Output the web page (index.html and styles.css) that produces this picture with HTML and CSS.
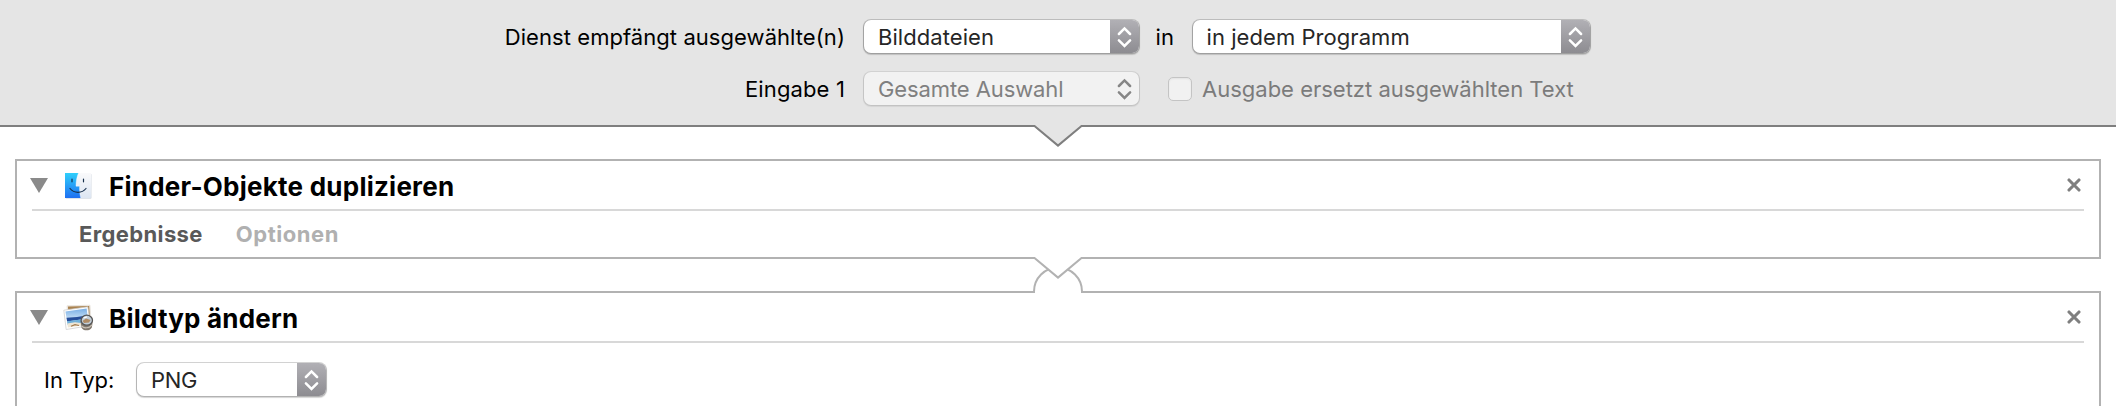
FILE: index.html
```
<!DOCTYPE html>
<html lang="de">
<head>
<meta charset="utf-8">
<title>Automator</title>
<link rel="stylesheet" href="styles.css">
</head>
<body>
<svg class="defs" width="0" height="0">
  <symbol id="chevrons" viewBox="0 0 29 34">
    <path d="M8.9 14 14.5 8.4 20.1 14M8.9 20.4 14.5 26 20.1 20.4" fill="none" stroke="currentColor" stroke-width="2.5" stroke-linecap="round" stroke-linejoin="miter"/>
  </symbol>
  <symbol id="close" viewBox="0 0 14 14">
    <path d="M2 2 12 12M12 2 2 12" fill="none" stroke="#7f7f7f" stroke-width="3.1" stroke-linecap="round"/>
  </symbol>
</svg>

<header class="service">
  <div class="row">
    <span class="label">Dienst empfängt ausgewählte(n)</span>
    <div class="popup popup-type"><span class="value">Bilddateien</span><svg class="stepper"><use href="#chevrons"/></svg></div>
    <span class="in">in</span>
    <div class="popup popup-app"><span class="value">in jedem Programm</span><svg class="stepper"><use href="#chevrons"/></svg></div>
  </div>
  <div class="row">
    <span class="label label-input">Eingabe 1</span>
    <div class="popup popup-type disabled"><span class="value">Gesamte Auswahl</span><svg class="stepper"><use href="#chevrons"/></svg></div>
    <span class="checkbox"></span>
    <span class="check-label">Ausgabe ersetzt ausgewählten Text</span>
  </div>
  <svg class="pointer" width="52" height="24" viewBox="0 0 52 24">
    <path d="M0 0H52V2H49.500L26 21.500 2.500 2H0Z" fill="#e5e5e5"/>
    <path d="M0 1H2.500L26 20.600 49.500 1H52" fill="none" stroke="#7f7f7f" stroke-width="2"/>
  </svg>
</header>

<main class="workflow">
  <section class="action">
    <div class="head">
      <svg class="disclosure" width="18" height="15" viewBox="0 0 18 15"><path d="M0 0H18L9 15Z" fill="#8a8a8a"/></svg>
      <svg class="icon" width="32" height="28" viewBox="0 0 32 28">
        <defs>
          <linearGradient id="blue" x1="0" y1="0" x2="0" y2="1"><stop offset="0" stop-color="#2fcffb"/><stop offset="1" stop-color="#1f70f2"/></linearGradient>
          <linearGradient id="pale" x1="0" y1="0" x2="0" y2="1"><stop offset="0" stop-color="#fafafb"/><stop offset="1" stop-color="#dde6f2"/></linearGradient>
        </defs>
        <rect x="2.500" y="1.700" width="26" height="25" rx="1" fill="#d5dbe3"/>
        <rect x="2" y="1" width="26" height="25" rx="1" fill="url(#pale)"/>
        <path d="M2 1H15.500C13.800 5 13 9.500 13 14.200H16.600C16.400 18 16.800 22.500 17.800 26H2Z" fill="url(#blue)"/>
        <path d="M15.500 1C13.800 5 13 9.500 13 14.200H16.600C16.400 18 16.800 22.500 17.800 26" fill="none" stroke="#fff" stroke-opacity=".5" stroke-width=".8"/>
        <path d="M9 7V9.800M20.500 7V9.800" stroke="#17304d" stroke-width="1.200" stroke-linecap="round"/>
        <path d="M7 16.500C11 21.600 19 21.600 23 16.500" fill="none" stroke="#17304d" stroke-width="1.200" stroke-linecap="round"/>
      </svg>
      <h2 class="title">Finder-Objekte duplizieren</h2>
      <svg class="close" width="14" height="14"><use href="#close"/></svg>
    </div>
    <div class="tabs"><span class="tab tab-results">Ergebnisse</span><span class="tab tab-options">Optionen</span></div>
    <svg class="link" width="52" height="36" viewBox="0 0 52 36">
      <path d="M2 34V36H50V34A24 24 0 0 0 2 34Z" fill="#fff"/>
      <path d="M2 36V34.500A24 24 0 0 1 50 34.500V36" fill="none" stroke="#b2b2b2" stroke-width="2"/>
      <path d="M0 0H52V2H49.500L26 21.500 2.500 2H0Z" fill="#fff"/>
      <path d="M0 1H2.500L26 20.600 49.500 1H52" fill="none" stroke="#b2b2b2" stroke-width="2"/>
    </svg>
  </section>

  <section class="action action-open">
    <div class="head">
      <svg class="disclosure" width="18" height="15" viewBox="0 0 18 15"><path d="M0 0H18L9 15Z" fill="#8a8a8a"/></svg>
      <svg class="icon" width="32" height="28" viewBox="0 0 32 28">
        <defs>
          <linearGradient id="sky" x1="0" y1="0" x2="0" y2="1"><stop offset="0" stop-color="#79afe6"/><stop offset="1" stop-color="#c8e1f6"/></linearGradient>
        </defs>
        <path d="M4 1.800 27 1.200 28 17 5 18Z" fill="#f1ece4" stroke="#d8d1c7" stroke-width=".5"/>
        <path d="M5 2.600 26.200 2 26.800 12 5.500 13Z" fill="#a9824f"/>
        <path d="M.8 6.200 24.800 2.800 27.600 21.500 3.200 25.500Z" fill="#fff" stroke="#c9c9c9" stroke-width=".7"/>
        <path d="M2.500 7.500 23.600 4.500 24.600 12 3.600 15Z" fill="url(#sky)"/>
        <path d="M3.500 13.800 14 13 24.600 11.200 25.300 14.600 4.100 17.600Z" fill="#274f9b"/>
        <path d="M4 17.200 25.300 14.500 25.900 19 4.600 21Z" fill="#6fb0da"/>
        <path d="M4.300 19.600 12 18.200 18 19 25.800 17.500 26.100 20.500 4.900 23.600Z" fill="#eee6d5"/>
        <path d="M8 22.200 12 20.600 16 21.500" stroke="#a37b4d" stroke-width="1.200" fill="none"/>
        <path d="M17.500 17 18.500 23.500C20 27.300 27 27.300 28.800 23.500L30 16Z" fill="#82786d"/>
        <path d="M18.500 21.800C21 24.700 26 24.500 29 20.800" fill="none" stroke="#c9c1b5" stroke-width="1.200"/>
        <ellipse cx="23.800" cy="16.200" rx="5.700" ry="5" fill="#c3cfda" stroke="#555" stroke-width="1.300"/>
        <path d="M19.500 16.900 23 14.600 27.600 15.900 26 18.600 21 18.900Z" fill="#b08c65"/>
        <path d="M20.500 14 24 12.900" stroke="#fff" stroke-width="1.200"/>
      </svg>
      <h2 class="title title-type">Bildtyp ändern</h2>
      <svg class="close" width="14" height="14"><use href="#close"/></svg>
    </div>
    <div class="form">
      <span class="form-label">In Typ:</span>
      <div class="popup popup-format"><span class="value">PNG</span><svg class="stepper"><use href="#chevrons"/></svg></div>
    </div>
  </section>
</main>
</body>
</html>
```
FILE: styles.css
```
* { box-sizing: border-box; }

body {
  margin: 0;
  height: 406px;
  background: #fff;
  color: #000;
  font: 22px/34px Inter, "Liberation Sans", sans-serif;
  letter-spacing: .06px;
  white-space: nowrap;
}

svg { display: block; flex: none; }
.defs { position: absolute; }

/* Service header */
.service {
  position: relative;
  display: flex;
  flex-direction: column;
  gap: 18px;
  height: 127px;
  padding-top: 20px;
  background: #e5e5e5;
  border-bottom: 2px solid #7f7f7f;
}

.row { display: flex; height: 34px; }

.label {
  width: 845px;
  margin-right: 19px;
  text-align: right;
}

.label-input { letter-spacing: .14px; }
.in { width: 37px; margin-left: 17px; }

.pointer {
  position: absolute;
  left: 1032px;
  top: 125px;
}

/* Pop-up buttons */
.popup {
  display: flex;
  justify-content: space-between;
  height: 33px;
  padding-left: 14px;
  overflow: hidden;
  border-radius: 7px;
  background: #fff;
  color: #262626;
  box-shadow: 0 0 0 1px rgba(0, 0, 0, .16), 0 1px 1px 1px rgba(0, 0, 0, .17);
}

.popup-type { width: 274.5px; }
.popup-app { width: 397px; }
.popup-format { width: 189px; }
.popup-format .value { letter-spacing: -.3px; }

.stepper {
  width: 29px;
  height: 34px;
  color: #fff;
  background: linear-gradient(#b1b0b5, #8c8b90);
}

.disabled {
  background: #f2f2f2;
  color: #808080;
  letter-spacing: -.1px;
  box-shadow: 0 0 0 1px rgba(0, 0, 0, .08), 0 1px 1px 1px rgba(0, 0, 0, .07);
}

.disabled .stepper { background: none; color: #868686; }

.checkbox {
  width: 24px;
  height: 24px;
  margin: 5px 10px 0 29.500px;
  border: 1.500px solid #c4c4c4;
  border-radius: 5px;
  background: #f1f1f1;
  box-shadow: inset 0 1px 2px rgba(0, 0, 0, .06);
}

.check-label { color: #7b7b7b; letter-spacing: 0; }

/* Workflow actions */
.workflow {
  display: flex;
  flex-direction: column;
  gap: 32px;
  padding: 32px 15px 0;
}

.action {
  position: relative;
  height: 100px;
  padding: 0 15px;
  border: 2px solid #b2b2b2;
}

.action-open { height: 115px; border-bottom: 0; }
.action:first-child { z-index: 1; }

.head {
  display: flex;
  height: 50px;
  padding: 0 3px 0 0;
  border-bottom: 2px solid #d8d8d8;
}

.disclosure { margin: 17px 16px 0 -2px; }
.icon { margin: 11px 14px 0 -1px; }

.title {
  flex: 1;
  margin: 0;
  padding-top: 2px;
  font-size: 26px;
  line-height: 48px;
  font-weight: 700;
  letter-spacing: .24px;
}

.title-type { letter-spacing: .21px; }
.close { margin-top: 17px; }

.tabs {
  display: flex;
  gap: 33px;
  padding-left: 47px;
  line-height: 46px;
  font-weight: 700;
}

.tab-results { color: #595959; letter-spacing: .37px; }
.tab-options { color: #b0b0b0; letter-spacing: .55px; }

/* Connector drawn across the gap between two actions */
.link {
  position: absolute;
  left: 1015px;
  top: 96px;
}

.form {
  display: flex;
  padding: 20px 0 0 12px;
}

.form-label { width: 93px; }
```
